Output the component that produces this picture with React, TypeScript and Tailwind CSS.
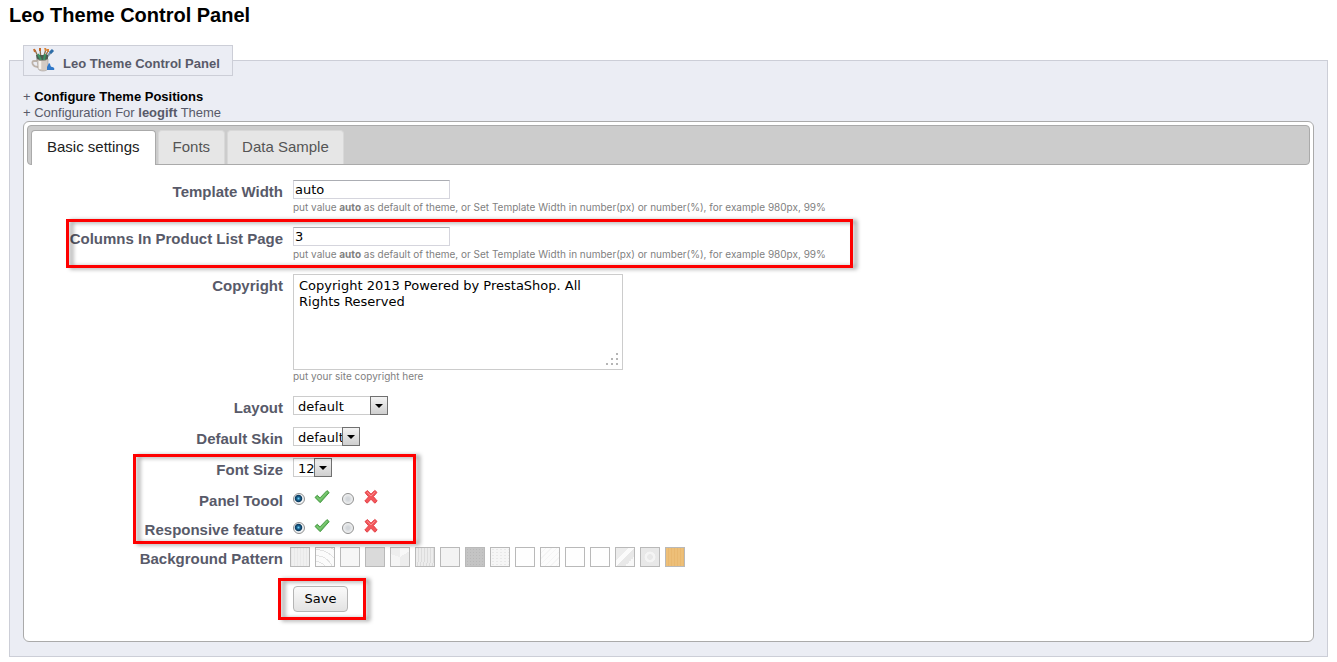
import { useState } from 'react';
import type { ReactNode } from 'react';

const TABS = ['Basic settings', 'Fonts', 'Data Sample'];

const LABEL = 'w-64 shrink-0 pt-1 text-right text-[15px] leading-4 font-bold text-[#585a69]';
const FIELD_FONT = "font-['DejaVu_Sans',sans-serif] text-[13px] text-black";
const FRAME =
  'pointer-events-none absolute border-3 border-[#fe0000] [filter:drop-shadow(4px_1px_2px_rgba(0,0,0,0.4))]';

interface RowProps {
  id: string;
  label: string;
  children: ReactNode;
}

function Row({ id, label, children }: RowProps) {
  return (
    <div className="flex gap-2.5">
      <label htmlFor={id} className={LABEL}>{label}</label>
      <div>{children}</div>
    </div>
  );
}

function Hint({ children }: { children: ReactNode }) {
  return (
    <p className="h-3.5 font-['Inter','Liberation_Sans',sans-serif] text-[10px] leading-[11px] text-[#7f7f7f]">
      {children}
    </p>
  );
}

function TextField({ id, value }: { id: string; value: string }) {
  return (
    <>
      <input
        id={id}
        type="text"
        defaultValue={value}
        className={`mb-[3px] block h-[19px] w-[157px] border border-[#d5d5dd] border-t-[#abadb3] bg-white px-px ${FIELD_FONT}`}
      />
      <Hint>
        put value <b>auto</b> as default of theme, or Set Template Width in number(px) or number(%), for example 980px, 99%
      </Hint>
    </>
  );
}

function Select({ id, width, options }: { id: string; width: string; options: string[] }) {
  return (
    <div className={`relative h-5 ${width}`}>
      <select
        id={id}
        className={`block h-[19px] w-full appearance-none border border-[#cccccc] bg-white pl-1 ${FIELD_FONT}`}
      >
        {options.map((o) => <option key={o}>{o}</option>)}
      </select>
      <span className="pointer-events-none absolute top-0 right-0 flex h-[19px] w-[18px] items-center justify-center border border-[#707070] bg-linear-to-b from-[#f3f3f3] to-[#cfcfcf]">
        <svg width="8" height="4" viewBox="0 0 8 4"><path d="M0 0h8L4 4z" fill="#000" /></svg>
      </span>
    </div>
  );
}

function Tick() {
  return (
    <svg width="16" height="16" viewBox="0 0 16 16">
      <path d="M1 8.4 3.3 6.3 6 8.9 13 1.6 15.2 3.6 6.2 13.7z" fill="#62b95b" stroke="#4a9a47" strokeWidth="1" strokeLinejoin="round" />
      <path d="M2.8 8.2 6 11 13.2 3" fill="none" stroke="#7cc873" strokeWidth="1.4" />
    </svg>
  );
}

function Cross() {
  return (
    <svg width="16" height="16" viewBox="0 0 16 16">
      <path d="M2 3.6 4.4 1.6 8 5.2 11.8 1.4 14 3.4 10.4 7.6 14.2 12 11.8 14.2 8 10.2 4.2 14.2 1.8 12 5.6 7.8z" fill="#f4565a" stroke="#e2444a" strokeWidth="1" strokeLinejoin="round" />
      <path d="M4.2 3.2 8 7l3.8-3.8" fill="none" stroke="#fb8d8c" strokeWidth="1" />
    </svg>
  );
}

const RADIO =
  'mt-1 size-3 appearance-none rounded-full border border-[#8e8f8f] bg-[radial-gradient(circle,#d2d6da_20%,#f4f4f4_75%)] checked:bg-[radial-gradient(circle_at_45%_45%,#6ed0f5_0,#17608f_22%,#0d3a5c_42%,#f0f2f4_54%)]';

function YesNo({ name, label }: { name: string; label: string }) {
  return (
    <div role="radiogroup" aria-label={label} className="flex h-[18px] gap-2.5">
      <span className={LABEL}>{label}</span>
      <div className="flex items-start gap-3">
        <label className="flex items-start gap-[9px]">
          <input type="radio" name={name} value="1" defaultChecked aria-label="Enabled" className={RADIO} />
          <Tick />
        </label>
        <label className="flex items-start gap-[9px]">
          <input type="radio" name={name} value="0" aria-label="Disabled" className={RADIO} />
          <Cross />
        </label>
      </div>
    </div>
  );
}

const PATTERNS = [
  'bg-[#e9e9e9] bg-[repeating-linear-gradient(90deg,transparent_0_1px,#f0f0f0_1px_3px)]',
  'bg-[#fbfbfb] bg-[repeating-radial-gradient(circle_at_0_140%,transparent_0_5px,#e2e2e2_5px_6px)]',
  'bg-[#f6f6f6]',
  'bg-[#dadada]',
  'bg-[#f1f1f1] bg-[conic-gradient(#f8f8f8_0_16%,#ededed_16%_50%,#f5f5f5_50%_80%,#eeeeee_80%)]',
  'bg-[#ececec] bg-[repeating-linear-gradient(92deg,transparent_0_2px,#dcdcdc_2px_3px)]',
  'bg-[#f3f3f3]',
  'bg-[#c4c4c4] bg-[radial-gradient(#b8b8b8_35%,transparent_40%)] bg-size-[3px_3px]',
  'bg-[#f6f6f6] bg-[radial-gradient(#e9e9e9_35%,transparent_40%)] bg-size-[4px_3px]',
  'bg-[#fefefe]',
  'bg-[#fcfcfc] bg-[repeating-linear-gradient(135deg,transparent_0_3px,#f5f5f5_3px_4px)]',
  'bg-[#fefefe]',
  'bg-[#fefefe]',
  'bg-[linear-gradient(135deg,#ececec_0_35%,#fbfbfb_35%_52%,#e8e8e8_52%_75%,#f8f8f8_75%)]',
  'bg-[#e8e8e8] bg-[radial-gradient(circle,#e8e8e8_20%,#f4f4f4_25%_40%,#e8e8e8_45%)]',
  'bg-[#edbf78] bg-[repeating-linear-gradient(90deg,transparent_0_2px,#e9b86f_2px_3px)]',
];

function BrushCup() {
  return (
    <svg width="24" height="24" viewBox="0 0 24 24">
      <path d="m4 2 4 9M9 1l1 10M15 1l-3 10M17 3l-4 8" stroke="#8b6b4a" strokeWidth="1.3" />
      <path d="m3 1 1 3M9 0v3" stroke="#c46a2b" strokeWidth="2" />
      <path d="m14 0 1 3M17 1v3" stroke="#d98335" strokeWidth="2" />
      <path d="m21 3-7 8" stroke="#7f99ab" strokeWidth="2.2" />
      <path d="m19 5 3-3" stroke="#2f6ea8" strokeWidth="3" />
      <path d="M5 7h12v6H6z" fill="#4c5b50" />
      <path d="m7 6 3 6M14 6l-1 6" stroke="#3d9363" strokeWidth="2" />
      <path d="M6 13H3c-3 0-2 6 4 6" fill="none" stroke="#bdb3aa" strokeWidth="1.8" />
      <path d="M6 11c3 2 8 2 11 0v9c0 4-10 4-10 0z" fill="#d3cbc4" stroke="#a39c96" strokeWidth=".6" />
      <path d="M9 13v8" stroke="#f5f2ee" strokeWidth="2.5" />
      <path d="M18 15c2 1 1 4 3 4s3 2 2 3h-7v-3z" fill="#2f78c9" />
    </svg>
  );
}

export default function App() {
  const [tab, setTab] = useState(0);

  return (
    <main className="bg-white px-[9px] pt-0.5 pb-[5px] font-['Liberation_Sans',Arial,sans-serif] text-[13px] text-[#585a69]">
      <h1 className="text-xl leading-[26px] font-bold text-black">Leo Theme Control Panel</h1>
      <fieldset className="mt-[17px] border border-[#ccced7] bg-[#ebedf4] px-[13px] pb-3.5">
        <legend className="flex h-[31px] min-w-[210px] items-end gap-2 border border-[#ccced7] bg-[#ebedf4] px-[7px] pb-[3px] text-[13px] leading-4 font-bold">
          <BrushCup />
          Leo Theme Control Panel
        </legend>

        <p className="mt-[13px] leading-4">
          + <a href="#positions" className="font-bold text-black">Configure Theme Positions</a>
        </p>
        <p className="leading-4">+ Configuration For <b>leogift</b> Theme</p>

        <div className="rounded-md border border-[#aaaaaa] bg-white px-[3px] pt-[3px] pb-[29px]">
          <div role="tablist" className="flex h-10 gap-0.5 rounded border border-[#aaaaaa] bg-[#cccccc] pt-1 pl-[3px] text-[15px]">
            {TABS.map((name, i) => (
              <button
                key={name}
                type="button"
                role="tab"
                aria-selected={i === tab}
                onClick={() => setTab(i)}
                className={
                  i === tab
                    ? '-mb-px rounded-t border border-b-0 border-[#aaaaaa] bg-white px-[15px] pb-0.5 text-[#212121]'
                    : 'rounded-t border border-b-0 border-[#d8d8d8] bg-[#e6e6e6] px-3.5 text-[#555555]'
                }
              >
                {name}
              </button>
            ))}
          </div>

          <form className="flex flex-col gap-[11px] pt-[15px]" onSubmit={(e) => e.preventDefault()}>
            <Row id="width" label="Template Width">
              <TextField id="width" value="auto" />
            </Row>

            <div className="relative">
              <Row id="columns" label="Columns In Product List Page">
                <TextField id="columns" value="3" />
              </Row>
              <div className={`${FRAME} -top-2 -bottom-[5px] left-[39px] w-[787px]`} />
            </div>

            <Row id="copyright" label="Copyright">
              <div className="relative mb-px w-[330px]">
                <textarea
                  id="copyright"
                  defaultValue="Copyright 2013 Powered by PrestaShop. All Rights Reserved"
                  className={`block h-24 w-full resize-none border border-[#cccccc] bg-white px-[5px] py-[3px] leading-4 ${FIELD_FONT}`}
                />
                <svg className="absolute right-1 bottom-1" width="13" height="13" viewBox="0 0 13 13" fill="#b5b5b5">
                  <path d="M10 0h2v2h-2zM5 5h2v2H5zM10 5h2v2h-2zM0 10h2v2H0zM5 10h2v2H5zM10 10h2v2h-2z" />
                </svg>
              </div>
              <Hint>put your site copyright here</Hint>
            </Row>

            <Row id="layout" label="Layout">
              <Select id="layout" width="w-[95px]" options={['default']} />
            </Row>
            <Row id="skin" label="Default Skin">
              <Select id="skin" width="w-[67px]" options={['default']} />
            </Row>

            <div className="relative flex flex-col gap-[11px]">
              <Row id="fontsize" label="Font Size">
                <Select id="fontsize" width="w-[39px]" options={['12']} />
              </Row>
              <YesNo name="panel" label="Panel Toool" />
              <YesNo name="responsive" label="Responsive feature" />
              <div className={`${FRAME} -top-1 -bottom-2 left-[106px] w-[283px]`} />
            </div>

            <div className="flex gap-[7px]">
              <span className={LABEL}>Background Pattern</span>
              <div className="flex gap-[5px]">
                {PATTERNS.map((p, i) => (
                  <button
                    key={i}
                    type="button"
                    aria-label={`Pattern ${i + 1}`}
                    className={`size-5 border border-[#b9b9b9] ${p}`}
                  />
                ))}
              </div>
            </div>

            <div className="mt-2 flex gap-2.5">
              <span className="w-64 shrink-0" />
              <div className="relative">
                <button
                  type="submit"
                  className={`block h-[26px] w-[55px] rounded-sm border border-[#b5b5b5] bg-linear-to-b from-[#fafafa] to-[#e3e3e3] ${FIELD_FONT}`}
                >
                  Save
                </button>
                <div className={`${FRAME} -top-2 -right-[18px] -bottom-2 -left-[15px]`} />
              </div>
            </div>
          </form>
        </div>
      </fieldset>
    </main>
  );
}
